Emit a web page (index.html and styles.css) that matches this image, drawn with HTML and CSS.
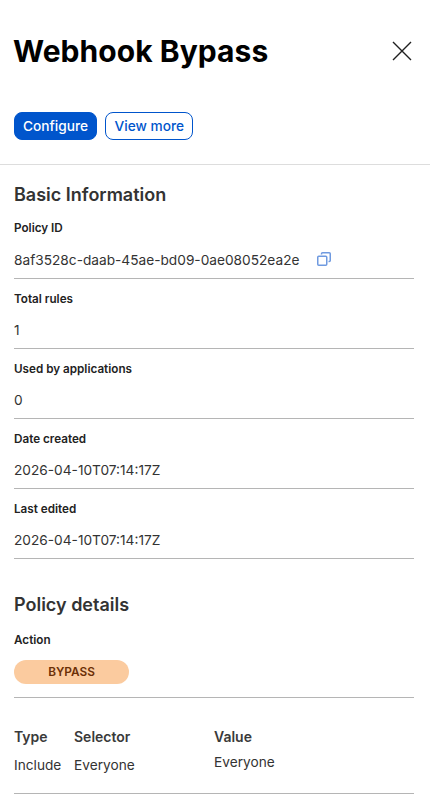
FILE: index.html
```html
<!DOCTYPE html>
<html lang="en">
<head>
    <meta charset="UTF-8">
    <meta name="viewport" content="width=device-width, initial-scale=1.0">
    <title>Webhook Bypass</title>
    <link rel="stylesheet" href="styles.css">
</head>
<body>
    <header class="panel-header">
        <div class="title-row">
            <h1>Webhook Bypass</h1>
            <button class="close" aria-label="Close">
                <svg width="20" height="20" viewBox="0 0 20 20"><path d="M1 1L19 19M19 1L1 19" stroke="#1f1f1f" stroke-width="1.4" fill="none"/></svg>
            </button>
        </div>
        <div class="actions">
            <a href="#" class="button primary">Configure</a>
            <a href="#" class="button outline">View more</a>
        </div>
    </header>

    <section class="content">
        <h2>Basic Information</h2>
        <div class="field">
            <div class="label">Policy ID</div>
            <div class="value">
                8af3528c-daab-45ae-bd09-0ae08052ea2e
                <svg class="copy" width="14" height="14" viewBox="0 0 14 14" fill="none" stroke="#6f9ae0" stroke-width="1.5">
                    <rect x="0.75" y="4.25" width="9" height="9" rx="1"/>
                    <path d="M4.5 2.5V1.75a1 1 0 0 1 1-1h6.75a1 1 0 0 1 1 1V8.5a1 1 0 0 1-1 1H11.5"/>
                </svg>
            </div>
        </div>
        <div class="field">
            <div class="label">Total rules</div>
            <div class="value">1</div>
        </div>
        <div class="field">
            <div class="label">Used by applications</div>
            <div class="value">0</div>
        </div>
        <div class="field">
            <div class="label">Date created</div>
            <div class="value">2026-04-10T07:14:17Z</div>
        </div>
        <div class="field">
            <div class="label">Last edited</div>
            <div class="value">2026-04-10T07:14:17Z</div>
        </div>

        <h2 class="second">Policy details</h2>
        <div class="field action">
            <div class="label">Action</div>
            <div class="pill">BYPASS</div>
        </div>

        <div class="rules">
            <div class="col-type">
                <div class="head">Type</div>
                <div class="cell">Include</div>
            </div>
            <div class="col-selector">
                <div class="head">Selector</div>
                <div class="cell">Everyone</div>
            </div>
            <div class="col-value">
                <div class="head">Value</div>
                <div class="cell">Everyone</div>
            </div>
        </div>
    </section>
</body>
</html>
```

FILE: styles.css
```css
body {
    margin: 0;
    background: white;
    font-family: 'Inter', sans-serif;
    color: #333;
    overflow: hidden;
}
.panel-header {
    padding: 33px 14px 0;
    height: 131px;
    border-bottom: 1px solid #ddd;
}
.title-row {
    display: flex;
    justify-content: space-between;
    align-items: center;
    height: 36px;
}
h1 {
    margin: 0;
    margin-left: -1px;
    font-size: 30px;
    font-weight: 700;
    letter-spacing: 0.05px;
    color: black;
}
.close {
    border: none;
    background: none;
    padding: 0;
    margin-right: 4px;
    display: flex;
}
.actions {
    display: flex;
    gap: 8px;
    margin-top: 43px;
}
.button {
    display: block;
    box-sizing: border-box;
    height: 28px;
    line-height: 26px;
    padding: 0 8px;
    border-radius: 8px;
    font-size: 13.7px;
    font-weight: 500;
    text-decoration: none;
}
.primary {
    background: #0055cc;
    border: 1px solid #0055cc;
    color: white;
}
.outline {
    padding: 0 8.5px;
    border: 1px solid #0055cc;
    color: #0055cc;
}
.content {
    padding: 0 16px 0 14px;
}
h2 {
    margin: 0;
    padding-top: 19px;
    font-size: 18px;
    line-height: 22px;
    font-weight: 600;
    color: #333;
}
h2.second {
    padding-top: 35px;
}
.field {
    height: 69px;
    border-bottom: 1px solid #b5b5b5;
}
h2 + .field {
    height: 58px;
    padding-top: 14px;
}
h2 + .action {
    height: 65px;
    padding-top: 16px;
}
.label {
    padding-top: 12px;
    font-size: 11.7px;
    line-height: 16px;
    font-weight: 600;
    color: #222;
}
h2 + .field .label {
    padding-top: 0;
}
.value {
    display: flex;
    align-items: center;
    margin-top: 13px;
    font-size: 13.7px;
    line-height: 20px;
    color: #333;
}
h2 + .field .value {
    margin-top: 14px;
}
.copy {
    margin-left: 17px;
    margin-top: -2px;
}
.pill {
    width: 115px;
    height: 24px;
    margin-top: 12px;
    border-radius: 12px;
    background: #fbcb9f;
    color: #6b2f06;
    font-size: 11.8px;
    line-height: 24px;
    font-weight: 600;
    text-align: center;
}
.rules {
    display: flex;
    height: 95px;
    border-bottom: 1px solid #b5b5b5;
}
.col-type {
    width: 60px;
    padding-top: 30px;
}
.col-selector {
    width: 140px;
    padding-top: 30px;
}
.col-value {
    padding-top: 30px;
}
.head {
    font-size: 14px;
    line-height: 17px;
    font-weight: 600;
    color: #3a3a3a;
}
.cell {
    margin-top: 12px;
    font-size: 13.7px;
    line-height: 17px;
}
.col-value .cell {
    margin-top: 9px;
}
```
